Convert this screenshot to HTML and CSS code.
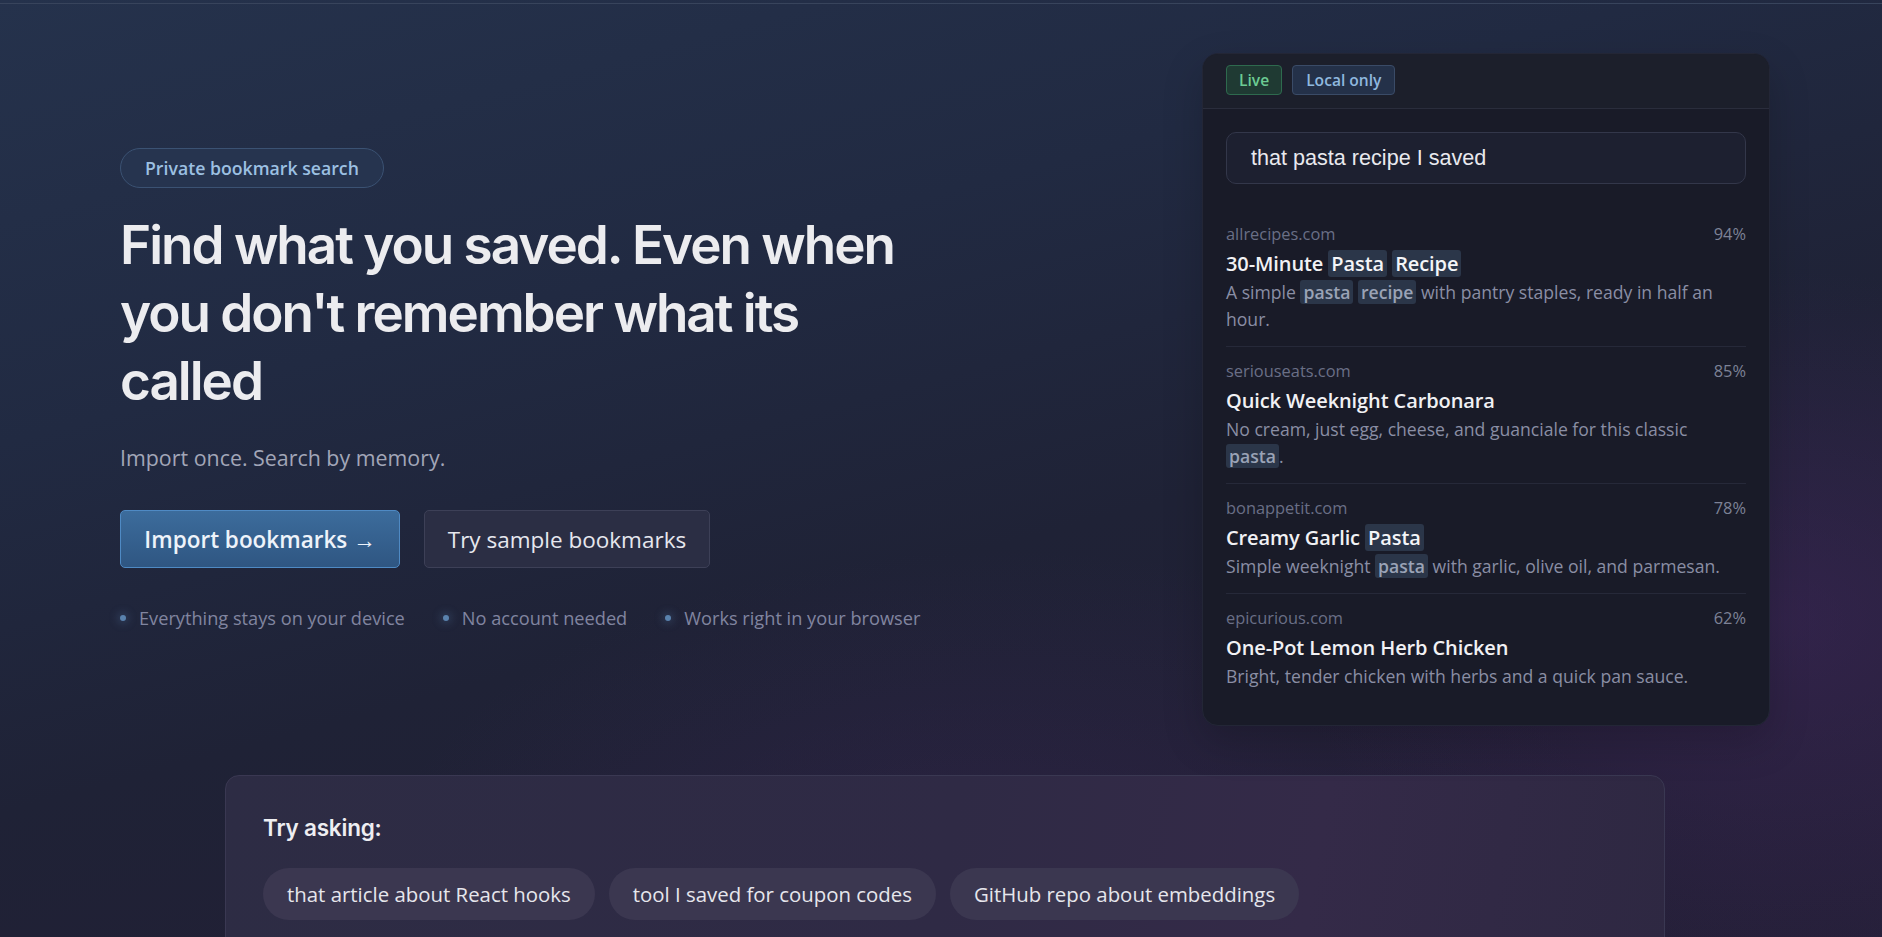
FILE: index.html
```html
<!DOCTYPE html>
<html lang="en">
<head>
<meta charset="utf-8">
<title>Private bookmark search</title>
<link rel="stylesheet" href="styles.css">
</head>
<body>
<div class="topline"></div>
<main class="page">
  <section class="hero">
    <div class="hero-left">
      <span class="pill">Private bookmark search</span>
      <h1 class="title">Find what you saved. Even when you don't remember what its called</h1>
      <p class="lead">Import once. Search by memory.</p>
      <div class="actions">
        <button class="btn btn-primary">Import bookmarks →</button>
        <button class="btn btn-secondary">Try sample bookmarks</button>
      </div>
      <ul class="features">
        <li><span class="dot"></span>Everything stays on your device</li>
        <li><span class="dot"></span>No account needed</li>
        <li><span class="dot"></span>Works right in your browser</li>
      </ul>
    </div>
    <div class="panel">
      <div class="panel-head">
        <span class="tag tag-live">Live</span>
        <span class="tag tag-local">Local only</span>
      </div>
      <div class="panel-body">
        <div class="search">that pasta recipe I saved</div>
        <ul class="results">
          <li class="result">
            <div class="meta"><span>allrecipes.com</span><span>94%</span></div>
            <div class="r-title">30-Minute <mark>Pasta</mark> <mark>Recipe</mark></div>
            <p class="r-desc">A simple <mark>pasta</mark> <mark>recipe</mark> with pantry staples, ready in half an hour.</p>
          </li>
          <li class="result">
            <div class="meta"><span>seriouseats.com</span><span>85%</span></div>
            <div class="r-title">Quick Weeknight Carbonara</div>
            <p class="r-desc">No cream, just egg, cheese, and guanciale for this classic <mark>pasta</mark>.</p>
          </li>
          <li class="result">
            <div class="meta"><span>bonappetit.com</span><span>78%</span></div>
            <div class="r-title">Creamy Garlic <mark>Pasta</mark></div>
            <p class="r-desc">Simple weeknight <mark>pasta</mark> with garlic, olive oil, and parmesan.</p>
          </li>
          <li class="result">
            <div class="meta"><span>epicurious.com</span><span>62%</span></div>
            <div class="r-title">One-Pot Lemon Herb Chicken</div>
            <p class="r-desc">Bright, tender chicken with herbs and a quick pan sauce.</p>
          </li>
        </ul>
      </div>
    </div>
  </section>
  <section class="ask">
    <h2 class="ask-title">Try asking:</h2>
    <div class="chips">
      <span class="chip">that article about React hooks</span>
      <span class="chip">tool I saved for coupon codes</span>
      <span class="chip">GitHub repo about embeddings</span>
    </div>
  </section>
</main>
</body>
</html>
```

FILE: styles.css
```css
* { box-sizing: border-box; }
html, body { margin: 0; padding: 0; }
body {
  min-height: 100vh;
  font-family: "Open Sans", "Noto Sans", sans-serif;
  color: #e8e9ee;
  background:
    radial-gradient(ellipse 700px 500px at 1780px 620px, rgba(70, 40, 100, 0.45), rgba(70, 40, 100, 0) 70%),
    radial-gradient(ellipse 900px 500px at 1000px 900px, rgba(60, 40, 90, 0.35), rgba(60, 40, 90, 0) 70%),
    linear-gradient(165deg, #25324c 0%, #212a42 30%, #1f2236 55%, #221f35 80%, #26203a 100%);
  overflow: hidden;
}
.topline {
  height: 4px;
  border-bottom: 1px solid #38445c;
}
.page {
  width: 1650px;
  margin-left: 120px;
}
.hero {
  display: flex;
  align-items: center;
  justify-content: space-between;
  padding-top: 49px;
}
.hero-left {
  width: 840px;
}
.pill {
  display: inline-block;
  height: 40px;
  line-height: 38px;
  padding: 0 24px;
  border-radius: 20px;
  border: 1px solid #3b5273;
  background: #26344f;
  color: #9cc0e2;
  font-size: 17.7px;
  font-weight: 600;
}
.title {
  margin: 23px 0 0;
  font-family: "Inter", sans-serif;
  font-size: 53px;
  line-height: 68px;
  font-weight: 600;
  letter-spacing: -2px;
  color: #ececef;
  width: 820px;
}
.lead {
  margin: 28px 0 0;
  font-size: 21.4px;
  line-height: 30px;
  color: #a2a6b8;
}
.actions {
  display: flex;
  gap: 24px;
  margin-top: 37px;
}
.btn {
  height: 58px;
  padding: 0 20px;
  border-radius: 5px;
  font-family: "Open Sans", sans-serif;
  font-size: 22.5px;
  cursor: pointer;
}
.btn-primary {
  width: 280px;
  color: #eef3fa;
  font-weight: 600;
  border: 1px solid #4f8ac4;
  background: linear-gradient(180deg, #3c6c9c 0%, #2f5682 100%);
}
.btn-secondary {
  width: 286px;
  color: #e6e7ee;
  font-weight: 400;
  border: 1px solid #3d4057;
  background: #2b2e44;
}
.features {
  display: flex;
  gap: 38px;
  margin: 37px 0 0;
  padding: 0;
  list-style: none;
  font-size: 18.2px;
  line-height: 26px;
  color: #8185a0;
}
.features li {
  display: flex;
  align-items: center;
  gap: 13px;
}
.dot {
  width: 6px;
  height: 6px;
  border-radius: 50%;
  background: #5a82ad;
  box-shadow: 0 0 8px 3px rgba(90, 130, 180, 0.25);
}
.panel {
  width: 568px;
  border-radius: 16px;
  background: #191b28;
  border: 1px solid #232636;
  overflow: hidden;
  box-shadow: 0 16px 40px rgba(0, 0, 0, 0.18);
}
.panel-head {
  display: flex;
  gap: 10px;
  height: 55px;
  padding: 11px 23px 0;
  background: #1c1f2b;
  border-bottom: 1px solid #2a2d3c;
}
.tag {
  display: inline-block;
  height: 30px;
  line-height: 28px;
  padding: 0 12px;
  border-radius: 4px;
  font-size: 15.6px;
  font-weight: 600;
}
.tag-live {
  color: #6ccb93;
  background: #1f3a33;
  border: 1px solid #2e6a4e;
}
.tag-local {
  color: #8fb8df;
  background: #243149;
  border: 1px solid #3a4b67;
  padding: 0 13px;
}
.panel-body {
  padding: 23px 23px 22px;
}
.search {
  height: 52px;
  line-height: 50px;
  padding: 0 24px;
  border-radius: 10px;
  background: #1d2030;
  border: 1px solid #33374a;
  font-family: "Liberation Sans", Arial, sans-serif;
  font-size: 21.6px;
  color: #e9e9ee;
}
.results {
  list-style: none;
  margin: 27px 0 0;
  padding: 0;
}
.result {
  padding: 13px 0 13px;
  border-bottom: 1px solid #262939;
}
.result:first-child {
  padding-top: 12px;
}
.result:last-child {
  border-bottom: 0;
}
.meta {
  display: flex;
  justify-content: space-between;
  font-size: 16.4px;
  line-height: 22px;
  color: #6a6f86;
}
.meta span:last-child {
  color: #7d8296;
}
.r-title {
  margin-top: 5px;
  font-size: 20px;
  line-height: 28px;
  font-weight: 600;
  color: #f1f1f4;
  letter-spacing: -0.1px;
}
.r-desc {
  margin: 1px 0 0;
  font-size: 17.6px;
  line-height: 27px;
  color: #8a8ea4;
}
mark {
  background: #2b3649;
  color: inherit;
  border-radius: 3px;
  padding: 0 3px;
}
.r-title mark {
  color: #f4f5f8;
}
.r-desc mark {
  color: #9aa3b6;
  font-weight: 600;
}
.ask {
  margin: 49px 0 0 105px;
  width: 1440px;
  height: 200px;
  padding: 34px 37px;
  border-radius: 14px;
  border: 1px solid #3a3852;
  background: linear-gradient(100deg, #2d2c44 0%, #2f2a45 50%, #342a48 75%, #2e2842 100%);
}
.ask-title {
  margin: 0;
  font-family: "Inter", sans-serif;
  font-size: 22.5px;
  line-height: 36px;
  font-weight: 600;
  letter-spacing: -0.2px;
  color: #eeeef2;
}
.chips {
  display: flex;
  gap: 14px;
  margin-top: 22px;
}
.chip {
  height: 52px;
  line-height: 52px;
  padding: 0 24px;
  border-radius: 26px;
  background: #3b3750;
  color: #e6e6ec;
  font-size: 20.4px;
}
```
